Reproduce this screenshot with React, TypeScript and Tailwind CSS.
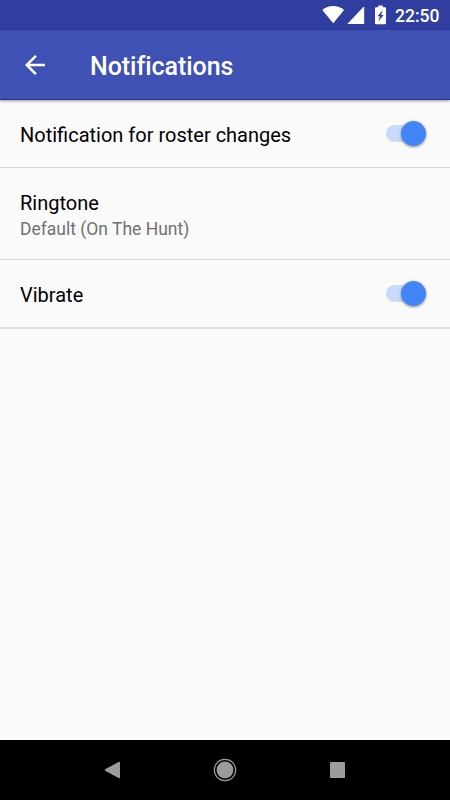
import React from 'react';

interface Preference {
  id: string;
  title: string;
  summary?: string;
  enabled?: boolean;
}

const preferences: Preference[] = [
  { id: 'roster', title: 'Notification for roster changes', enabled: true },
  { id: 'ringtone', title: 'Ringtone', summary: 'Default (On The Hunt)' },
  { id: 'vibrate', title: 'Vibrate', enabled: true },
];

const StatusBar: React.FC = () => (
  <div className="flex h-[30px] shrink-0 items-center bg-[#303f9f] pl-[322px] text-white">
    <svg className="h-[30px] w-[65px] shrink-0" viewBox="0 0 65 30" fill="currentColor">
      {/* Wi-Fi */}
      <path d="M11.200 23.300L0.300 10.100C3.300 7.500 7.200 6 11.200 6s7.900 1.500 10.900 4.100z" />
      {/* Cell signal */}
      <path d="M25.300 24L41.200 7.200Q42.200 6.300 42.200 7.500V23.200Q42.200 24 41.400 24z" />
      {/* Charging battery */}
      <path
        fillRule="evenodd"
        d="M56.300 5.500h4.400v1.800h2.100c.7 0 1.200.5 1.200 1.200v14.500c0 .7-.5 1.200-1.200 1.200h-8.600c-.7 0-1.200-.5-1.200-1.200V8.500c0-.7.5-1.200 1.200-1.200h2.100zM60.600 10.200L55.500 16.200h2.400l-1.400 5.300 5.100-6.500h-2.400z"
      />
    </svg>
    <span className="ml-2 mt-[3px] text-[17.5px] font-medium leading-none">22:50</span>
  </div>
);

const AppBar: React.FC = () => (
  <header className="z-10 flex h-[70px] shrink-0 items-center border-b border-[#203499] bg-[#3f51b5] px-5 text-white shadow-[0_1px_3px_rgba(0,0,0,0.4)]">
    <button aria-label="Back" className="mt-px">
      <svg className="size-[30px]" viewBox="0 0 24 24" fill="currentColor">
        <path d="M20 11H7.830l5.590-5.590L12 4l-8 8 8 8 1.410-1.410L7.830 13H20v-2z" />
      </svg>
    </button>
    <h1 className="ml-10 mt-[5px] text-[25px] font-medium leading-[30px] tracking-[-0.05px]">Notifications</h1>
  </header>
);

const Switch: React.FC<{ checked: boolean }> = ({ checked }) => (
  <button role="switch" aria-checked={checked} className="flex h-[26px] w-10 items-center rounded-full">
    <span className="flex h-[17px] w-10 items-center justify-end rounded-full bg-[#c9dbfb]">
      <span className="size-[25px] shrink-0 rounded-full bg-[#4285f9] shadow-[0_1px_3px_rgba(0,0,0,0.45)]" />
    </span>
  </button>
);

const PreferenceRow: React.FC<{ item: Preference }> = ({ item }) => (
  <li
    className={`flex items-center justify-between border-b border-[#d8d8d8] pl-5 pr-6 last:h-[69px] last:border-b-2 last:border-[#e2e2e2] ${item.summary ? 'h-[92px]' : 'h-[68px]'}`}
  >
    <div className={item.summary ? 'pt-1' : 'pt-0.5'}>
      <div className="text-[20px] leading-[26px] text-black">{item.title}</div>
      {item.summary && <div className="text-[17.5px] leading-[26px] text-[#717171]">{item.summary}</div>}
    </div>
    {item.enabled !== undefined && <Switch checked={item.enabled} />}
  </li>
);

const NavigationBar: React.FC = () => (
  <nav className="flex h-[60px] shrink-0 items-center justify-center bg-black text-[#9c9c9c]">
    <svg className="h-[60px] w-[450px]" viewBox="0 0 450 60" fill="currentColor">
      <path d="M105.600 29.100L118.600 22q1.400-.7 1.400.8v14.400q0 1.500-1.400.8L105.600 30.900q-1.400-.9 0-1.800z" />
      <circle cx="225" cy="30" r="8.400" />
      <circle cx="225" cy="30" r="10.700" fill="none" stroke="currentColor" strokeWidth="1.200" />
      <rect x="330" y="22" width="15" height="16" rx="0.800" />
    </svg>
  </nav>
);

export default function App() {
  return (
    <div className="flex h-screen w-full flex-col overflow-hidden bg-[#fafafa] font-[Roboto,sans-serif]">
      <StatusBar />
      <AppBar />
      <ul className="flex-1">
        {preferences.map((item) => (
          <PreferenceRow key={item.id} item={item} />
        ))}
      </ul>
      <NavigationBar />
    </div>
  );
}
